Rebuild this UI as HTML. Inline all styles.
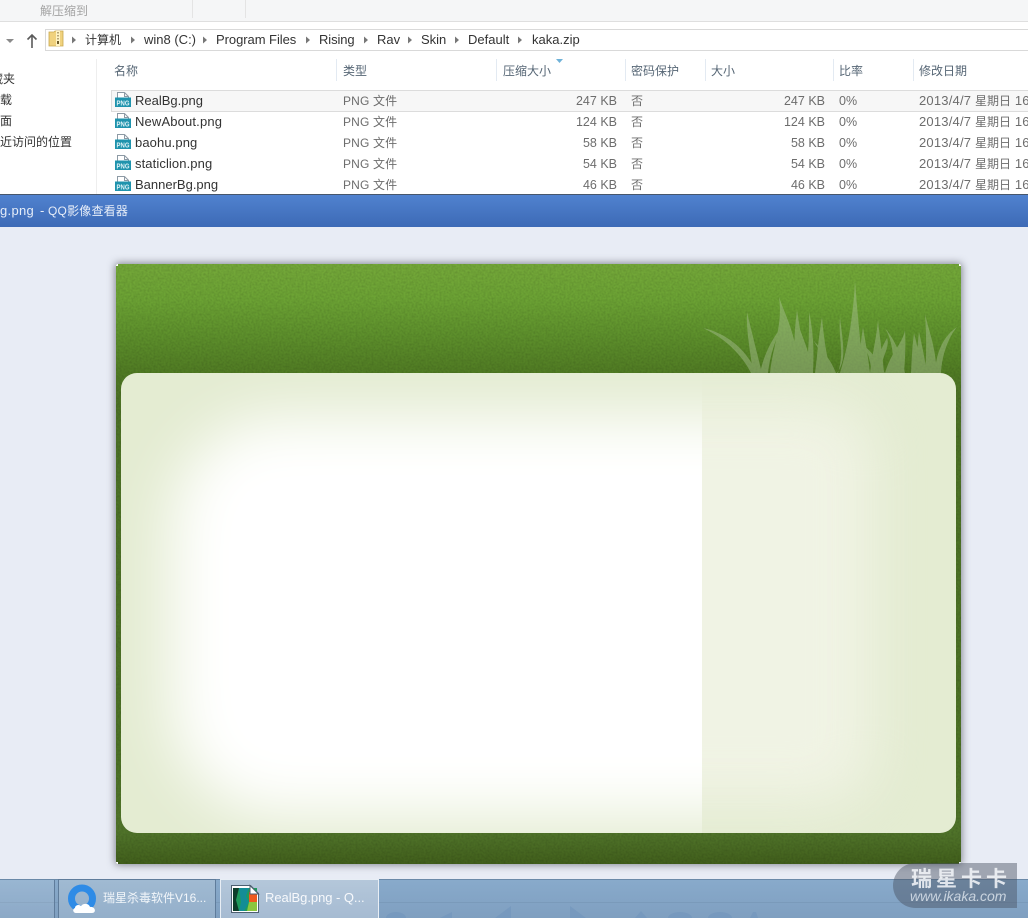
<!DOCTYPE html>
<html><head><meta charset="utf-8"><style>
html,body{margin:0;padding:0}
body{width:1028px;height:918px;position:relative;overflow:hidden;background:#e8ecf5;font-family:"Liberation Sans","Noto Sans CJK SC",sans-serif;font-size:13px;color:#333}
.a{position:absolute;white-space:nowrap}
.t{position:absolute;white-space:nowrap;line-height:16px}
.h{color:#566675;font-size:12px;top:63px}
.sep{position:absolute;top:59px;width:1px;height:22px;background:#e3eaf2}
.g{color:#6d6d6d;font-size:12.5px}
.p{color:#6d6d6d;font-size:12px;letter-spacing:.15px}
.d{color:#6d6d6d;font-size:13px;letter-spacing:.2px}
.d span{font-size:12px;letter-spacing:0}
.r{text-align:right}
.side{font-size:12px;color:#333}
</style></head><body>

<!-- explorer white background -->
<div class="a" style="left:0;top:22px;width:1028px;height:172px;background:#fff"></div>

<!-- toolbar -->
<div class="a" style="left:0;top:0;width:1028px;height:21px;background:#f5f6f7;border-bottom:1px solid #dfdfdf"></div>
<div class="a" style="left:192px;top:0;width:1px;height:18px;background:#e4e4e4"></div>
<div class="a" style="left:245px;top:0;width:1px;height:18px;background:#e4e4e4"></div>
<div class="t" style="left:40px;top:3px;font-size:12px;color:#a3a3a3">解压缩到</div>

<!-- address bar -->
<div class="a" style="left:45px;top:29px;width:990px;height:20px;background:#fff;border:1px solid #d9d9d9"></div>
<svg class="a" style="left:0;top:25px" width="70" height="28" viewBox="0 0 70 28">
<path d="M6 14h8l-4 4z" fill="#8a8a8a"/>
<path d="M32 23V10M27.5 14.5L32 10l4.500 4.500" fill="none" stroke="#5a5a5a" stroke-width="1.600"/>
<path d="M49 7h5l1-1h8v15H49z" fill="#f0d27e" stroke="#c9a84e" stroke-width=".8"/>
<path d="M56 6h4v15h-4z" fill="#fff3c4"/>
<path d="M57.500 7h1v1.500h-1zM57.500 10h1v1.500h-1zM57.500 13h1v1.500h-1zM57 16h2v3h-2z" fill="#6d5a2a"/>
</svg>
<svg class="a" style="left:0;top:34px" width="540" height="12" viewBox="0 0 540 12" fill="#777">
<path d="M72 2.500l4 3.500-4 3.500zM131 2.500l4 3.500-4 3.500zM203 2.500l4 3.500-4 3.500zM306 2.500l4 3.500-4 3.500zM364 2.500l4 3.500-4 3.500zM408 2.500l4 3.500-4 3.500zM455 2.500l4 3.500-4 3.500zM518 2.500l4 3.500-4 3.500z"/>
</svg>
<div class="t" style="left:85px;top:32px;font-size:12px">计算机</div>
<div class="t" style="left:144px;top:32px">win8 (C:)</div>
<div class="t" style="left:216px;top:32px;letter-spacing:-.05px">Program Files</div>
<div class="t" style="left:319px;top:32px;letter-spacing:-.1px">Rising</div>
<div class="t" style="left:377px;top:32px">Rav</div>
<div class="t" style="left:421px;top:32px">Skin</div>
<div class="t" style="left:468px;top:32px">Default</div>
<div class="t" style="left:532px;top:32px">kaka.zip</div>

<!-- sidebar -->
<div class="a" style="left:96px;top:59px;width:1px;height:135px;background:#eeeeee"></div>
<div class="t side" style="left:-9px;top:71px">藏夹</div>
<div class="t side" style="left:-12px;top:92px">下载</div>
<div class="t side" style="left:0;top:113px">面</div>
<div class="t side" style="left:-12px;top:134px">最近访问的位置</div>

<!-- header -->
<div class="t h" style="left:114px">名称</div>
<div class="t h" style="left:343px">类型</div>
<div class="t h" style="left:503px">压缩大小</div>
<div class="t h" style="left:631px">密码保护</div>
<div class="t h" style="left:711px">大小</div>
<div class="t h" style="left:839px">比率</div>
<div class="t h" style="left:919px">修改日期</div>
<div class="sep" style="left:336px"></div>
<div class="sep" style="left:496px"></div>
<div class="sep" style="left:625px"></div>
<div class="sep" style="left:705px"></div>
<div class="sep" style="left:833px"></div>
<div class="sep" style="left:913px"></div>
<svg class="a" style="left:556px;top:59px" width="8" height="5"><path d="M0 0h7L3.500 4z" fill="#6fb2d8"/></svg>

<!-- selected row -->
<div class="a" style="left:111px;top:90px;width:930px;height:20px;background:#f7f7f7;border:1px solid #dcdcdc"></div>

<!-- PNG icons -->
<svg class="a" style="left:114px;top:91px" width="18" height="103" viewBox="0 0 18 103">
<g><path d="M3.500 8V1.500h7l4 4v3M10.500 1.500v4h4" fill="#fff" stroke="#8d9aa5"/><rect x="1" y="6.500" width="16" height="9.500" fill="#1f93ad"/><text x="9" y="14.500" font-size="7.500" font-weight="bold" text-anchor="middle" fill="#dff3f7" font-family="Liberation Sans" textLength="13" lengthAdjust="spacingAndGlyphs">PNG</text></g>
<g transform="translate(0,21)"><path d="M3.500 8V1.500h7l4 4v3M10.500 1.500v4h4" fill="#fff" stroke="#8d9aa5"/><rect x="1" y="6.500" width="16" height="9.500" fill="#1f93ad"/><text x="9" y="14.500" font-size="7.500" font-weight="bold" text-anchor="middle" fill="#dff3f7" font-family="Liberation Sans" textLength="13" lengthAdjust="spacingAndGlyphs">PNG</text></g>
<g transform="translate(0,42)"><path d="M3.500 8V1.500h7l4 4v3M10.500 1.500v4h4" fill="#fff" stroke="#8d9aa5"/><rect x="1" y="6.500" width="16" height="9.500" fill="#1f93ad"/><text x="9" y="14.500" font-size="7.500" font-weight="bold" text-anchor="middle" fill="#dff3f7" font-family="Liberation Sans" textLength="13" lengthAdjust="spacingAndGlyphs">PNG</text></g>
<g transform="translate(0,63)"><path d="M3.500 8V1.500h7l4 4v3M10.500 1.500v4h4" fill="#fff" stroke="#8d9aa5"/><rect x="1" y="6.500" width="16" height="9.500" fill="#1f93ad"/><text x="9" y="14.500" font-size="7.500" font-weight="bold" text-anchor="middle" fill="#dff3f7" font-family="Liberation Sans" textLength="13" lengthAdjust="spacingAndGlyphs">PNG</text></g>
<g transform="translate(0,84)"><path d="M3.500 8V1.500h7l4 4v3M10.500 1.500v4h4" fill="#fff" stroke="#8d9aa5"/><rect x="1" y="6.500" width="16" height="9.500" fill="#1f93ad"/><text x="9" y="14.500" font-size="7.500" font-weight="bold" text-anchor="middle" fill="#dff3f7" font-family="Liberation Sans" textLength="13" lengthAdjust="spacingAndGlyphs">PNG</text></g>
</svg>

<!-- rows -->
<div class="t" style="left:135px;top:93px">RealBg.png</div>
<div class="t p" style="left:343px;top:93px">PNG 文件</div>
<div class="t g r" style="left:517px;width:100px;top:93px">247 KB</div>
<div class="t p" style="left:631px;top:93px">否</div>
<div class="t g r" style="left:725px;width:100px;top:93px">247 KB</div>
<div class="t g" style="left:839px;top:93px">0%</div>
<div class="t d" style="left:919px;top:93px">2013/4/7 <span>星期日</span> 16:00</div>

<div class="t" style="left:135px;top:114px;letter-spacing:.15px">NewAbout.png</div>
<div class="t p" style="left:343px;top:114px">PNG 文件</div>
<div class="t g r" style="left:517px;width:100px;top:114px">124 KB</div>
<div class="t p" style="left:631px;top:114px">否</div>
<div class="t g r" style="left:725px;width:100px;top:114px">124 KB</div>
<div class="t g" style="left:839px;top:114px">0%</div>
<div class="t d" style="left:919px;top:114px">2013/4/7 <span>星期日</span> 16:00</div>

<div class="t" style="left:135px;top:135px;letter-spacing:.1px">baohu.png</div>
<div class="t p" style="left:343px;top:135px">PNG 文件</div>
<div class="t g r" style="left:517px;width:100px;top:135px">58 KB</div>
<div class="t p" style="left:631px;top:135px">否</div>
<div class="t g r" style="left:725px;width:100px;top:135px">58 KB</div>
<div class="t g" style="left:839px;top:135px">0%</div>
<div class="t d" style="left:919px;top:135px">2013/4/7 <span>星期日</span> 16:00</div>

<div class="t" style="left:135px;top:156px;letter-spacing:.1px">staticlion.png</div>
<div class="t p" style="left:343px;top:156px">PNG 文件</div>
<div class="t g r" style="left:517px;width:100px;top:156px">54 KB</div>
<div class="t p" style="left:631px;top:156px">否</div>
<div class="t g r" style="left:725px;width:100px;top:156px">54 KB</div>
<div class="t g" style="left:839px;top:156px">0%</div>
<div class="t d" style="left:919px;top:156px">2013/4/7 <span>星期日</span> 16:00</div>

<div class="t" style="left:135px;top:177px">BannerBg.png</div>
<div class="t p" style="left:343px;top:177px">PNG 文件</div>
<div class="t g r" style="left:517px;width:100px;top:177px">46 KB</div>
<div class="t p" style="left:631px;top:177px">否</div>
<div class="t g r" style="left:725px;width:100px;top:177px">46 KB</div>
<div class="t g" style="left:839px;top:177px">0%</div>
<div class="t d" style="left:919px;top:177px">2013/4/7 <span>星期日</span> 16:00</div>

<!-- viewer title bar -->
<div class="a" style="left:0;top:194px;width:1028px;height:33px;box-sizing:border-box;border-top:1px solid #46566c;background:linear-gradient(#5082cf,#3d6ab6)"></div>
<div class="t" style="left:0;top:203px;color:#e6edf8;font-size:13px;letter-spacing:.3px">g.png</div>
<div class="t" style="left:40px;top:203px;color:#e6edf8;font-size:13px">-</div>
<div class="t" style="left:48px;top:203px;color:#e6edf8;font-size:12px;letter-spacing:.2px">QQ影像查看器</div>

<!-- image -->
<div class="a" style="left:116px;top:264px;width:845px;height:600px;border-radius:2px;box-shadow:0 0 8px 1px rgba(50,50,60,.55);background:linear-gradient(#74a839 0,#6ca334 35px,#5e912c 70px,#507b23 109px,#4d7226 130px,#4d7226 500px,#50742a 569px,#415f1b 600px);overflow:hidden">
<svg class="a" style="left:0;top:0" width="845" height="600">
<filter id="n" x="0" y="0" width="100%" height="100%"><feTurbulence type="fractalNoise" baseFrequency=".5" numOctaves="2" seed="3"/><feColorMatrix values="0 0 0 0 0 0 0 0 0 0 0 0 0 0 0 .22 0 0 0 -.07"/></filter>
<rect width="845" height="600" filter="url(#n)"/>
</svg>
<svg class="a" style="left:0;top:0" width="845" height="120" viewBox="116 264 845 120">
<g fill="#b5c9a2" opacity=".4">
<path d="M703 328C725 333 745 347 757 373H751C742 355 725 338 703 328Z"/>
<path d="M747 312C750 325 755 345 762 373H753C750 350 746 330 747 312Z"/>
<path d="M760 373C765 350 775 335 783 325C775 340 770 355 768 373Z"/>
<path d="M779 297C785 315 797 335 799 373H770C773 345 783 325 779 297Z"/>
<path d="M795 373C793 350 795 325 797 310C800 330 804 350 803 373Z"/>
<path d="M798 373C797 350 797 335 798 324C802 335 806 345 808 352C809 340 809 330 809 312C814 335 814 355 813 373Z"/>
<path d="M815 373C817 360 818 340 822 317C824 340 827 360 832 373Z"/>
<path d="M813 340C822 350 830 358 836 373H826C824 360 820 350 813 340Z"/>
<path d="M838 373C845 350 838 340 840 317C843 345 847 360 837 373Z"/>
<path d="M840 373C847 350 853 320 855 281C858 320 861 350 864 373Z"/>
<path d="M858 373C860 350 861 340 863 327C865 340 868 355 870 373Z"/>
<path d="M863 345C870 350 878 360 885 373H872C870 360 868 352 863 345Z"/>
<path d="M870 373C873 350 876 340 878 320C880 340 882 350 884 373Z"/>
<path d="M878 373C884 355 890 345 887 338C880 350 878 360 872 373Z"/>
<path d="M885 328C893 338 900 350 905 373H893C894 355 892 340 885 328Z"/>
<path d="M885 373C892 350 902 345 905 330C906 345 905 360 904 373Z"/>
<path d="M911 373C912 350 913 340 914 333C917 345 920 355 920 373Z"/>
<path d="M916 373C917 350 918 340 919 332C922 345 925 360 927 373Z"/>
<path d="M925 373C927 350 926 330 925 314C930 335 935 345 937 373Z"/>
<path d="M935 373C936 350 945 335 957 327C948 338 942 355 941 373Z"/>
</g>
</svg>
<div class="a" style="left:5px;top:109px;width:835px;height:460px;border-radius:16px;overflow:hidden;background:#e4ecd2">
<div class="a" style="left:0;top:0;width:581px;height:460px;overflow:hidden">
<div class="a" style="left:50px;top:44px;width:760px;height:398px;background:#fff;border-radius:110px;filter:blur(30px)"></div>
</div>
<div class="a" style="left:581px;top:0;width:254px;height:460px;overflow:hidden">
<div class="a" style="left:-120px;top:30px;width:290px;height:400px;background:#f0f3e4;border-radius:50px;filter:blur(28px)"></div>
</div>
</div>
<div class="a" style="left:0;top:0;width:2px;height:2px;background:#fff"></div>
<div class="a" style="right:0;top:0;width:2px;height:2px;background:#fff"></div>
<div class="a" style="left:0;bottom:0;width:2px;height:2px;background:#fff"></div>
<div class="a" style="right:0;bottom:0;width:2px;height:2px;background:#e8ecf5"></div>
</div>

<!-- taskbar -->
<div class="a" style="left:0;top:879px;width:1028px;height:39px;box-sizing:border-box;border-top:1px solid #6a89a8;background:linear-gradient(#88aacb,#7f9fc0)"></div>
<div class="a" style="left:0;top:902px;width:1028px;height:1px;background:rgba(90,120,150,.2)"></div>
<svg class="a" style="left:380px;top:880px" width="460" height="38" viewBox="380 880 460 38" fill="#6f93bb" fill-opacity=".55">
<path d="M386 918a10 6 0 0 1 20 0zM440 918l12-6v6zM495 918l16-12v12zM570 906l16 12h-16zM635 918l6-7 6 7zM668 918a12 6 0 0 1 24 0zM708 918a12 6 0 0 1 24 0zM750 918l3-6h3l2 6z"/>
</svg>
<div class="a" style="left:0;top:880px;width:54px;height:38px;background:linear-gradient(rgba(255,255,255,.14),rgba(255,255,255,.1));border-right:1px solid #5f7c9b"></div>
<div class="a" style="left:58px;top:879px;width:158px;height:39px;box-sizing:border-box;border:1px solid #5f7c9b;border-bottom:0;background:linear-gradient(#a0bad2,#94afca)"></div>
<div class="a" style="left:220px;top:879px;width:159px;height:39px;box-sizing:border-box;border:1px solid #e8eef5;border-bottom:0;background:linear-gradient(#b4c7da,#a6bbd2)"></div>
<svg class="a" style="left:66px;top:884px" width="32" height="30" viewBox="0 0 32 30">
<circle cx="16" cy="14.500" r="10.500" fill="none" stroke="#2e8be6" stroke-width="7"/>
<path d="M10 29c-3 0-4-4-1-5 0-3 4-4 6-2 2-3 8-3 9 1 5-1 7 6 2 6z" fill="#fff"/>
</svg>
<div class="t" style="left:103px;top:890px;color:#f2f6fa;font-size:12px">瑞星杀毒软件V16...</div>
<svg class="a" style="left:230px;top:884px" width="30" height="30" viewBox="0 0 30 30">
<path d="M1.500 1.500h19l8 8v19h-27z" fill="#fff" stroke="#4d5f70"/>
<rect x="3" y="4" width="24" height="23" fill="#1f9a5c"/>
<path d="M3 4h6l-3 12 3 11H3z" fill="#0d3d2a"/>
<path d="M9 4h10l-3 8 3 6-5 9H9l2-9z" fill="#138d96"/>
<path d="M19 8l8 2v8h-8z" fill="#ef5a1e"/>
<path d="M19 18h8v9h-10z" fill="#8cc63f"/>
<path d="M20 1.500l8.500 8.500H20z" fill="#fff" stroke="#4d5f70"/>
</svg>
<div class="t" style="left:265px;top:890px;color:#f7f9fc;font-size:13px;letter-spacing:-.05px">RealBg.png - Q...</div>

<!-- watermark -->
<div class="a" style="left:893px;top:863px;width:124px;height:45px;border-radius:24px 0 0 24px;background:rgba(70,80,95,.45)"></div>
<div class="t" style="left:911px;top:869px;color:rgba(245,247,250,.85);font-size:21px;font-weight:bold;letter-spacing:4px;line-height:22px">瑞星卡卡</div>
<div class="t" style="left:910px;top:888px;color:rgba(225,232,240,.8);font-size:14px;font-style:italic;line-height:16px">www.ikaka.com</div>

</body></html>
